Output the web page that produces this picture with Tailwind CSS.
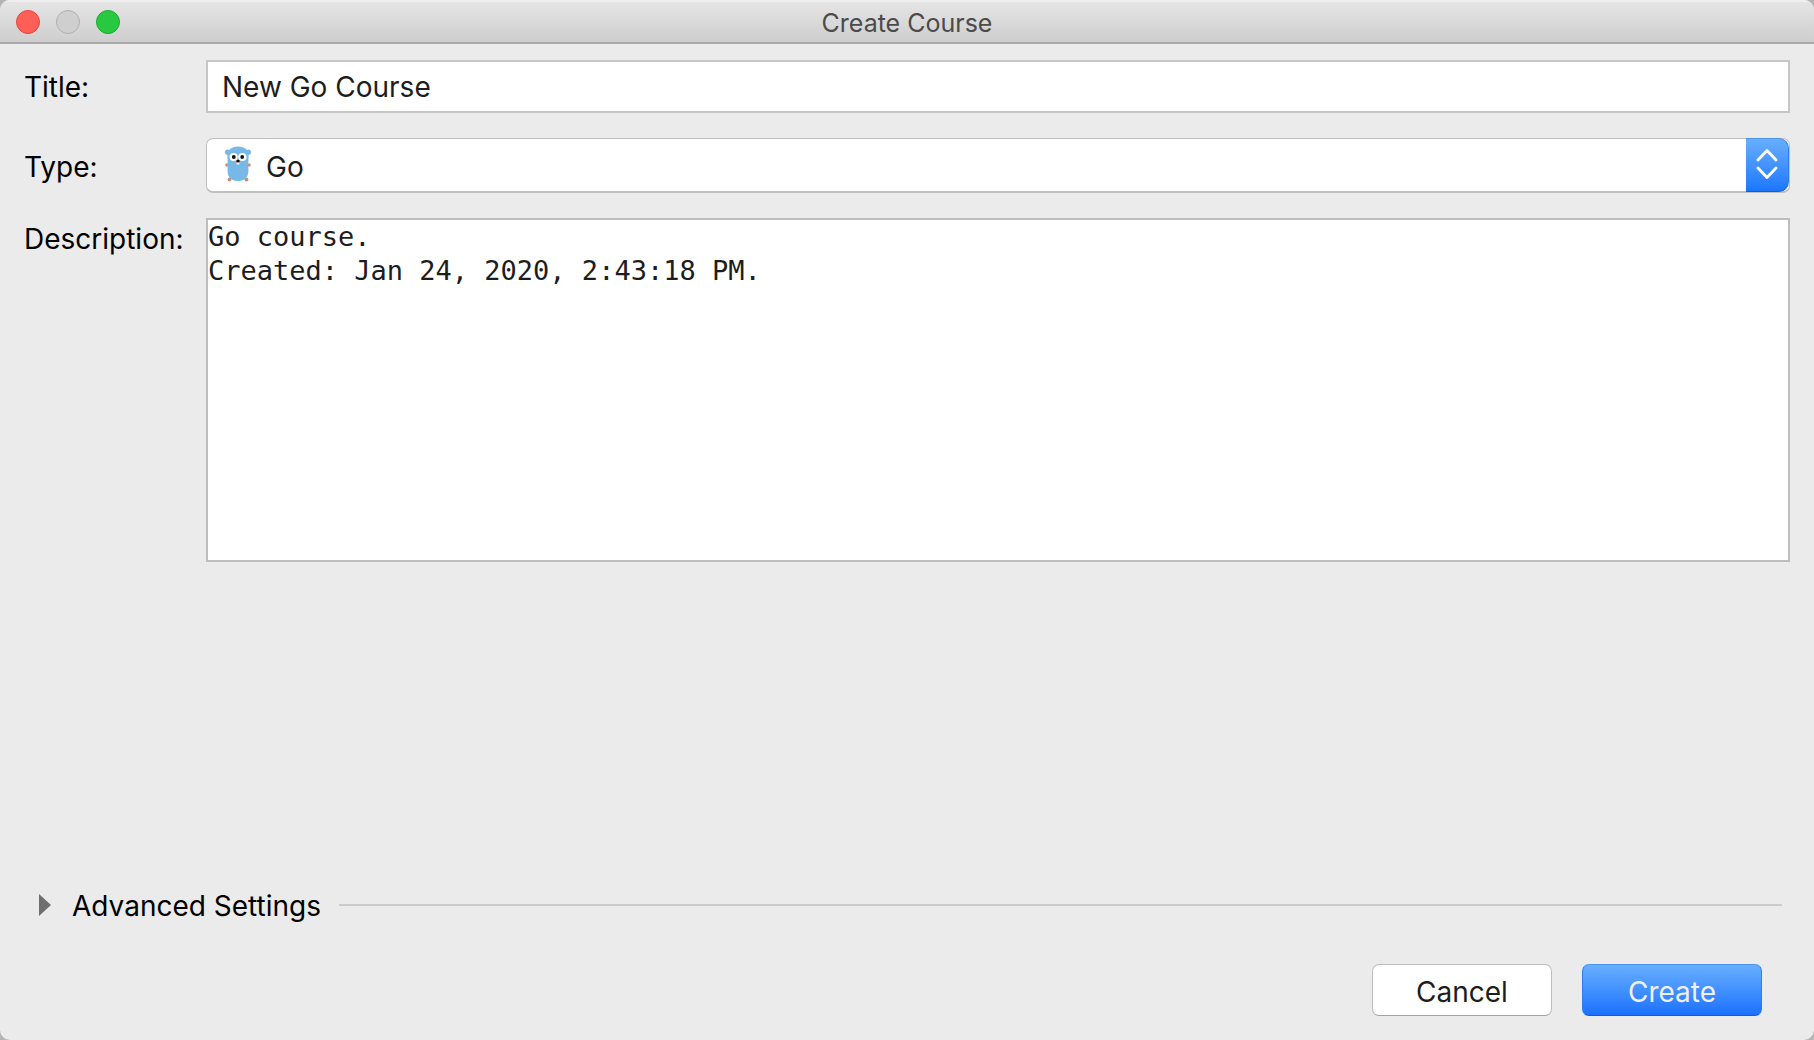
<!DOCTYPE html>
<html lang="en">

<head>
    <title>Create Course</title>
    <meta charset="UTF-8">
    <meta name="viewport" content="width=device-width, initial-scale=1">
    <script src="https://cdn.jsdelivr.net/npm/@tailwindcss/browser@4"></script>
</head>

<body class="bg-[#b4b4b4] font-['Inter',sans-serif] text-[28px] leading-8 text-black">
    <div class="flex min-h-screen flex-col overflow-hidden rounded-[10px] bg-[#ebebeb]">
        <header class="grid h-11 grid-cols-[1fr_auto_1fr] items-center border-t-2 border-b-2 border-t-[#efefef] border-b-[#a9a9a9] bg-linear-to-b from-[#e5e5e5] to-[#cecece] px-4">
            <div class="flex gap-4">
                <button type="button" aria-label="Close" class="size-6 rounded-full border border-[#e2463f] bg-[#ff5f57]"></button>
                <button type="button" aria-label="Minimize" class="size-6 rounded-full border border-[#b0b0b0] bg-[#cfcfcf]" disabled></button>
                <button type="button" aria-label="Zoom" class="size-6 rounded-full border border-[#1aab29] bg-[#28c940]"></button>
            </div>
            <h1 class="pt-px text-[25px] text-[#4b4b4b]">Create Course</h1>
        </header>

        <form class="flex grow flex-col pt-4 pr-6 pb-6 pl-6">
            <div class="grid grid-cols-[182px_1fr] items-center gap-y-[25px]">
                <label for="title">Title:</label>
                <input id="title" type="text" value="New Go Course" class="h-[53px] w-full border-2 border-[#c6c6c6] bg-white px-[14px] text-[#1d1d1d] outline-none">

                <label for="type" class="pt-[3px]">Type:</label>
                <div class="relative">
                    <select id="type" class="block h-[55px] w-full appearance-none rounded-[7px] border border-b-2 border-[#c0c0c0] bg-white pt-[3px] pr-12 pl-[59px] text-[#1d1d1d] outline-none">
                        <option>Go</option>
                    </select>
                    <!-- gopher -->
                    <svg class="pointer-events-none absolute top-2 left-[18px] h-9 w-7" viewBox="0 0 28 36">
                        <g fill="#c69076">
                            <circle cx="3" cy="19" r="1.8" />
                            <circle cx="25" cy="19" r="1.8" />
                            <circle cx="5.5" cy="33.5" r="1.9" />
                            <circle cx="22.5" cy="33.5" r="1.9" />
                        </g>
                        <g fill="#76b9e6">
                            <circle cx="3.6" cy="6.2" r="2.6" />
                            <circle cx="24.4" cy="6.2" r="2.6" />
                            <path d="M14 .5C8.5.5 3.6 3.2 3.4 9c0 4 .4 7 .4 10-.2 4-.7 8 .8 11 1.600 3.200 5.200 5 9.400 5s7.800-1.800 9.400-5c1.500-3 1-7 .8-11 0-3 .4-6 .4-10C24.400 3.200 19.500.5 14 .5z" />
                        </g>
                        <circle cx="9.600" cy="11" r="4.100" fill="#fff" />
                        <circle cx="18.400" cy="11" r="4.100" fill="#fff" />
                        <circle cx="9.800" cy="11" r="1.900" fill="#111" />
                        <circle cx="18.200" cy="11" r="1.900" fill="#111" />
                        <rect x="12.600" y="16" width="2.800" height="2.400" rx=".7" fill="#fff" />
                        <ellipse cx="14" cy="16" rx="2.200" ry="1.300" fill="#c69076" />
                        <ellipse cx="14" cy="14.900" rx="1.700" ry="1.200" fill="#111" />
                    </svg>
                    <span class="pointer-events-none absolute top-0 right-px flex h-[54px] w-[43px] items-center justify-center rounded-r-[10px] border border-l-0 border-t-[#4a93f2] border-r-[#2f7bf5] border-b-[#1b50f8] bg-linear-to-b from-[#67aeff] to-[#1b76ff]">
                        <svg class="h-8 w-6" viewBox="0 0 24 32" fill="none" stroke="#fff" stroke-width="2.800" stroke-linecap="round" stroke-linejoin="round">
                            <path d="M3 11 12 1.500 21 11M3 19l9 9.500L21 19" />
                        </svg>
                    </span>
                </div>

                <label for="description" class="self-start pt-[5px]">Description:</label>
                <textarea id="description" class="block h-[344px] w-full resize-none border-2 border-[#bdbdbd] bg-white font-['DejaVu_Sans_Mono',monospace] text-[27px] leading-[34px] text-[#1d1d1d] outline-none">Go course.
Created: Jan 24, 2020, 2:43:18 PM.</textarea>
            </div>

            <div class="mt-auto mr-2 flex items-center gap-[18px]">
                <button type="button" aria-expanded="false" class="flex items-center gap-[21px] pl-[15px]">
                    <svg class="h-[22px] w-3" viewBox="0 0 12 22" fill="#6e6e6e">
                        <path d="M0 0 12 11 0 22z" />
                    </svg>
                    <span class="pt-[3px]">Advanced Settings</span>
                </button>
                <hr class="grow border-t-2 border-[#cbcbcb]">
            </div>

            <div class="mt-[42px] mr-7 flex justify-end gap-[30px]">
                <button type="button" class="h-[52px] w-[180px] rounded-[7px] border border-[#bdbdbd] border-b-[#a3a3a3] bg-white pt-[3px] text-[#1d1d1d]">Cancel</button>
                <button type="submit" class="h-[52px] w-[180px] rounded-[7px] border border-t-[#4a93f2] border-r-[#2f7bf5] border-b-[#1b50f8] border-l-[#2f7bf5] bg-linear-to-b from-[#67aeff] to-[#1b70ff] pt-[3px] text-[#f0f0f0]">Create</button>
            </div>
        </form>
    </div>
</body>

</html>
